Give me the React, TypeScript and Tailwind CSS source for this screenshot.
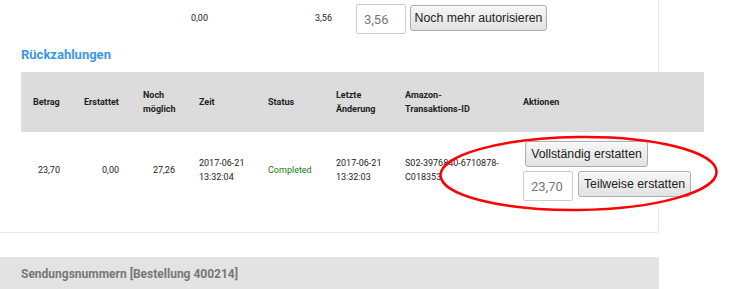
import React from "react";

const btn =
  "h-[26px] rounded-[3px] border border-[#adadad] bg-linear-to-b from-[#f6f6f6] to-[#e2e2e2] text-[#222] text-[12.3px] leading-none font-['Liberation_Sans',Arial,sans-serif] shadow-[inset_0_1px_0_#fff] whitespace-nowrap";
const inp =
  "h-[30px] w-[50px] rounded-[2px] border border-[#cccccc] bg-white pl-[7px] text-[13px] text-[#777] font-['Roboto',sans-serif] outline-none";

const cols = [
  { w: "w-[51px]", head: ["Betrag"] },
  { w: "w-[59px]", head: ["Erstattet"] },
  { w: "w-[56px]", head: ["Noch", "möglich"] },
  { w: "w-[69px]", head: ["Zeit"] },
  { w: "w-[68px]", head: ["Status"] },
  { w: "w-[69px]", head: ["Letzte", "Änderung"] },
  { w: "w-[118px]", head: ["Amazon-", "Transaktions-ID"] },
  { w: "w-[193px]", head: ["Aktionen"] },
];

export default function App() {
  return (
    <div className="relative w-[735px] h-[289px] overflow-hidden bg-white font-['Roboto',sans-serif] text-[#222]">
      <div className="w-[659px] h-[233px] border-r border-b border-[#e6e6e6] rounded-br-[3px]">
        {/* top row */}
        <div className="flex items-center h-[38px] pl-[191px] text-[9px]">
          <span className="w-[124px]">0,00</span>
          <span className="w-[41px]">3,56</span>
          <input className={inp} defaultValue="3,56" />
          <button className={`${btn} ml-[4px] w-[137px] -mt-[2px]`}>Noch mehr autorisieren</button>
        </div>

        <h2 className="mt-[9px] ml-[21px] text-[13px] leading-[16px] font-bold text-[#3a97e6]">Rückzahlungen</h2>

        {/* table */}
        <div className="mt-[9px] ml-[21px] w-[683px] bg-white">
          <div className="flex items-center h-[60px] bg-[#dcdcdc] text-[9px] font-bold leading-[14px] text-[#222]">
            {cols.map((c, i) => (
              <div key={i} className={`${c.w} px-[12px]`}>
                {c.head.map((h) => (
                  <div key={h} className="whitespace-nowrap">{h}</div>
                ))}
              </div>
            ))}
          </div>
          <div className="flex items-center h-[75px] text-[9px] leading-[14px] whitespace-nowrap">
            <div className="w-[51px] px-[12px] text-right">23,70</div>
            <div className="w-[59px] px-[12px] text-right">0,00</div>
            <div className="w-[56px] px-[12px] text-right">27,26</div>
            <div className="w-[69px] px-[12px]">
              <div>2017-06-21</div>
              <div>13:32:04</div>
            </div>
            <div className="w-[68px] px-[12px] text-[#1e7a12]">Completed</div>
            <div className="w-[69px] px-[12px]">
              <div>2017-06-21</div>
              <div>13:32:03</div>
            </div>
            <div className="w-[118px] px-[12px]">
              <div>S02-3976840-6710878-</div>
              <div>C018353</div>
            </div>
            <div className="w-[193px] pl-[12px] pt-[3px] flex flex-col items-start gap-[4px]">
              <button className={`${btn} ml-[2px] w-[123px]`}>Vollständig erstatten</button>
              <div className="flex items-start gap-[5px]">
                <input className={inp} defaultValue="23,70" />
                <button className={`${btn} w-[113px]`}>Teilweise erstatten</button>
              </div>
            </div>
          </div>
        </div>
      </div>

      <div className="mt-[24px] w-[659px] h-[40px] bg-[#e3e3e3] rounded-tr-[3px] pl-[21px] pt-[10px]">
        <div className="text-[12px] leading-[14px] font-bold text-[#777]">Sendungsnummern [Bestellung 400214]</div>
      </div>

      <svg className="absolute left-0 top-0 pointer-events-none" width="735" height="289" viewBox="0 0 735 289">
        <ellipse cx="578.5" cy="173.5" rx="138" ry="36.5" fill="none" stroke="#ff0000" strokeWidth="2.5" transform="rotate(-0.7 578.5 173.5)" />
      </svg>
    </div>
  );
}
